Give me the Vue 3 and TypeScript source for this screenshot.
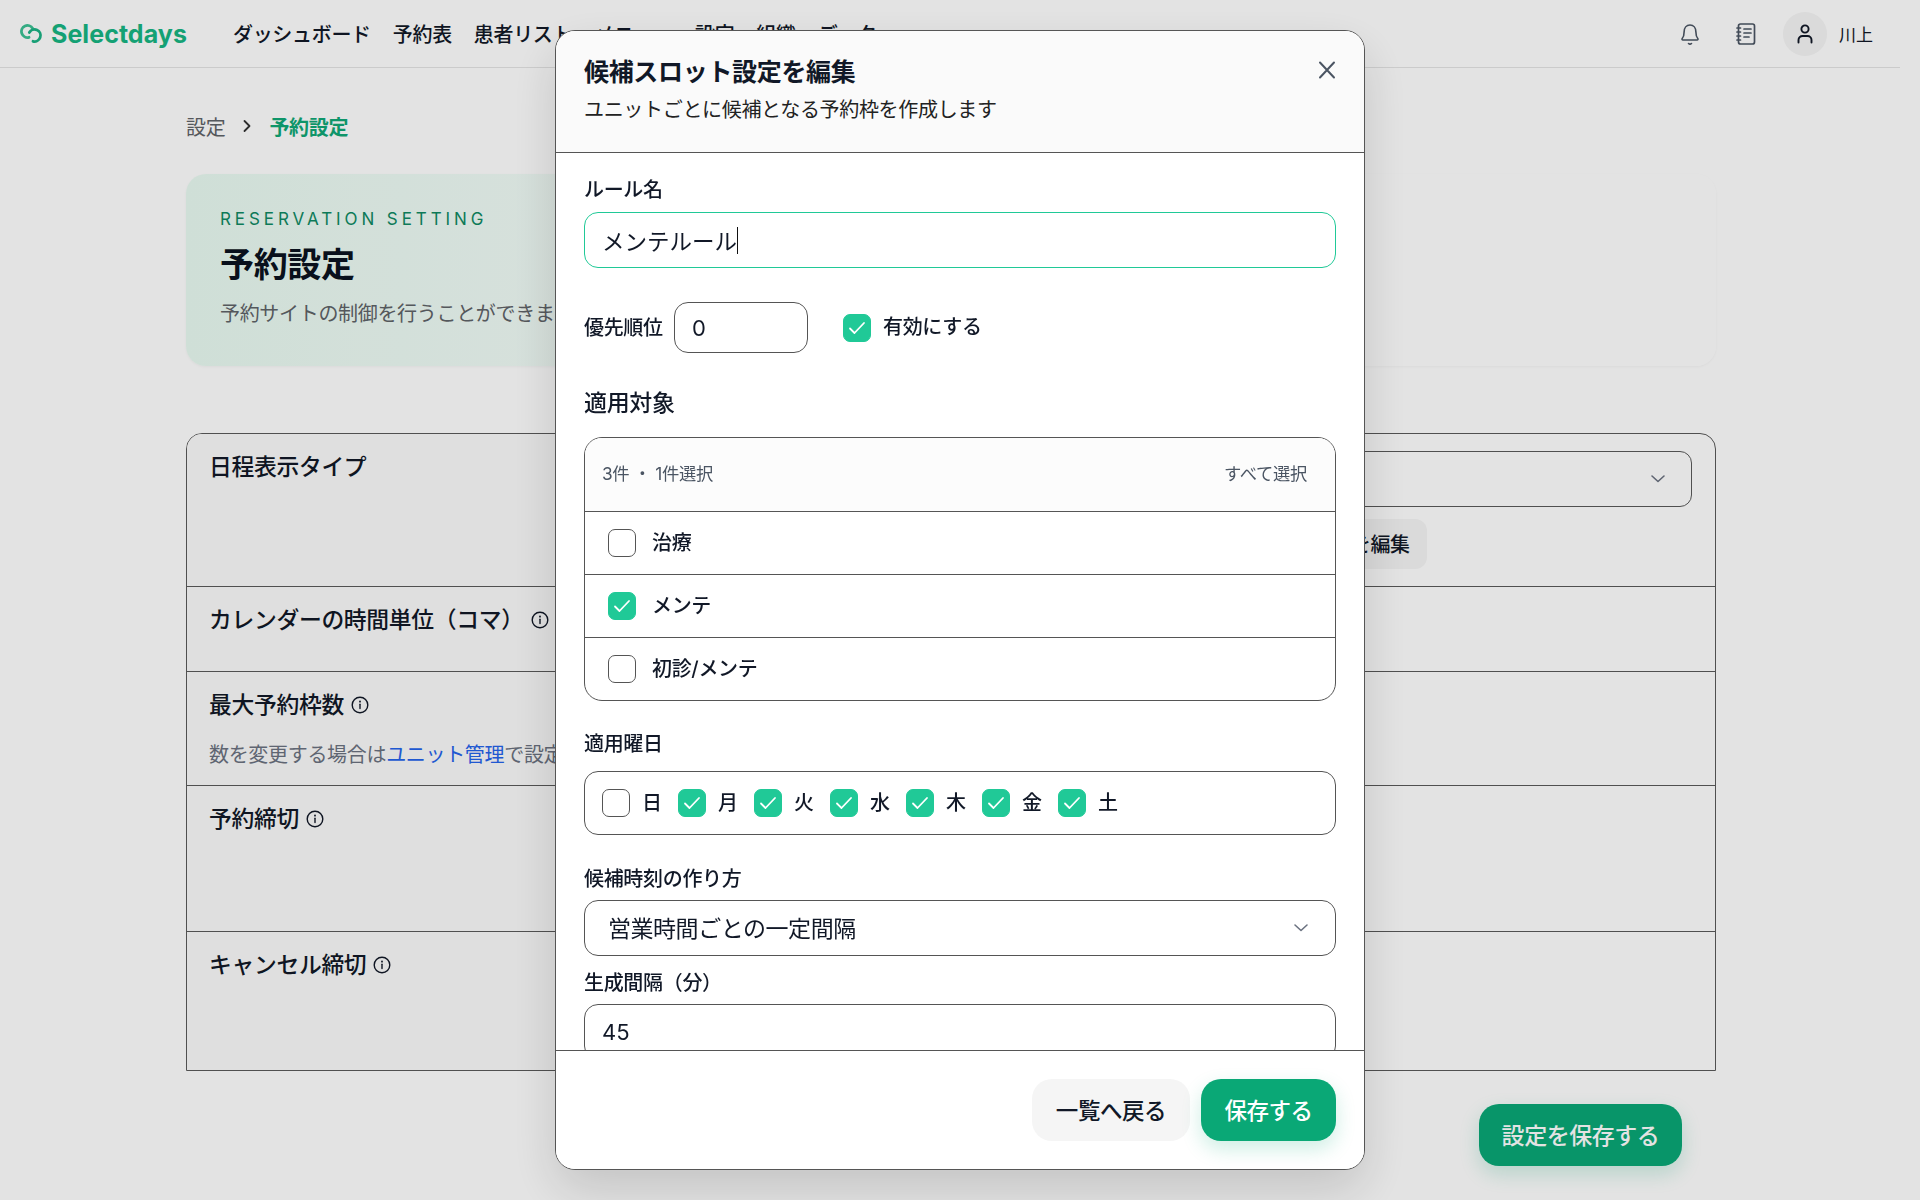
<script setup lang="ts">
const navItems: string[] = ['ダッシュボード', '予約表', '患者リスト', 'メニュー', '設定', '組織', 'データ']
const rows: { label: string; note?: boolean; info: boolean }[] = [
  { label: '日程表示タイプ', info: false },
  { label: 'カレンダーの時間単位（コマ）', info: true },
  { label: '最大予約枠数', note: true, info: true },
  { label: '予約締切', info: true },
  { label: 'キャンセル締切', info: true }
]
const targets = [
  { name: '治療', on: false },
  { name: 'メンテ', on: true },
  { name: '初診/メンテ', on: false }
]
const days = [
  { name: '日', on: false },
  { name: '月', on: true },
  { name: '火', on: true },
  { name: '水', on: true },
  { name: '木', on: true },
  { name: '金', on: true },
  { name: '土', on: true }
]
</script>

<template>
  <div class="page">
    <header class="topbar">
      <div class="logo">
        <svg width="24" height="20" viewBox="0 0 24 20" fill="none">
          <path d="M12.700 4.500A6 6 0 1 0 9 13.300" stroke="#3cc194" stroke-width="2.800" stroke-linecap="round" />
          <path d="M9.300 8.500A6 6 0 1 1 13 17.300" stroke="#1cb385" stroke-width="2.800" stroke-linecap="round" />
        </svg>
        <span>Selectdays</span>
      </div>
      <nav class="nav">
        <a v-for="n in navItems" :key="n">{{ n }}</a>
      </nav>
      <div class="top-right">
        <svg width="24" height="26" viewBox="0 0 24 26" fill="none" stroke="#4b5563" stroke-width="1.600" stroke-linecap="round" stroke-linejoin="round">
          <path d="M4.200 17.500c1.500-1.600 1.900-3 1.900-6.500 0-4 2.300-7 5.900-7s5.900 3 5.900 7c0 3.500.4 4.900 1.900 6.500.5.600.1 1.500-.7 1.500H4.900c-.8 0-1.200-.9-.7-1.500Z" />
          <path d="M10.500 22.500c.8.700 2.200.700 3 0" />
        </svg>
        <svg class="book" width="24" height="26" viewBox="0 0 24 26" fill="none" stroke="#4b5563" stroke-width="1.700" stroke-linecap="round" stroke-linejoin="round">
          <rect x="4.500" y="3" width="16" height="20" rx="2" />
          <path d="M3 7h3.500M3 11h3.500M3 15h3.500M3 19h3.500M10 8h7M10 12h7M10 16h5" />
        </svg>
        <div class="avatar">
          <svg width="24" height="26" viewBox="0 0 24 26" fill="none" stroke="#111827" stroke-width="1.900" stroke-linecap="round">
            <circle cx="12" cy="8" r="3.600" />
            <path d="M5.500 21.500V19a4 4 0 0 1 4-4h5a4 4 0 0 1 4 4v2.500" />
          </svg>
        </div>
        <span class="user">川上</span>
      </div>
    </header>

    <main class="content">
      <div class="crumbs">
        <span class="crumb">設定</span>
        <svg width="10" height="14" viewBox="0 0 10 14" fill="none" stroke="#333" stroke-width="1.800" stroke-linecap="round" stroke-linejoin="round"><path d="M2.500 2l5 5-5 5" /></svg>
        <span class="crumb-on">予約設定</span>
      </div>

      <section class="hero">
        <div class="eyebrow">RESERVATION SETTING</div>
        <h1>予約設定</h1>
        <p>予約サイトの制御を行うことができます</p>
      </section>

      <section class="table">
        <div v-for="(r, i) in rows" :key="r.label" class="row">
          <div class="cell-left">
            <div class="row-label">
              <span>{{ r.label }}</span>
              <svg v-if="r.info" width="18" height="18" viewBox="0 0 18 18" fill="none" stroke="#111827" stroke-width="1.400" stroke-linecap="round">
                <circle cx="9" cy="9" r="7.800" />
                <path d="M9 8.200v4.300" />
                <path d="M9 5.400v.3" stroke-width="1.800" />
              </svg>
            </div>
            <p v-if="r.note" class="row-note">数を変更する場合は<a>ユニット管理</a>で設定してください</p>
          </div>
          <div class="cell-right">
            <template v-if="i === 0">
              <div class="bg-select">
                <svg width="16" height="10" viewBox="0 0 16 10" fill="none" stroke="#6b7280" stroke-width="1.600" stroke-linecap="round" stroke-linejoin="round"><path d="M2 2l6 5.500L14 2" /></svg>
              </div>
              <button class="bg-edit">候補スロット設定を編集</button>
            </template>
          </div>
        </div>
      </section>

      <div class="page-actions">
        <button class="save-page">設定を保存する</button>
      </div>
    </main>
  </div>

  <div class="overlay">
    <div class="modal">
      <div class="m-head">
        <div>
          <h2>候補スロット設定を編集</h2>
          <p>ユニットごとに候補となる予約枠を作成します</p>
        </div>
        <svg class="close" width="24" height="24" viewBox="0 0 24 24" fill="none" stroke="#4b5563" stroke-width="2" stroke-linecap="round"><path d="M5 4.500l14 15M19 4.500l-14 15" /></svg>
      </div>

      <div class="m-body">
        <label class="f-label first">ルール名</label>
        <div class="input focus">メンテルール<i class="caret"></i></div>

        <div class="prio">
          <label class="prio-label">優先順位</label>
          <div class="input small">0</div>
          <span class="cb on"><svg width="22" height="22" viewBox="0 0 22 22" fill="none" stroke="#fff" stroke-width="1.800" stroke-linecap="round" stroke-linejoin="round"><path d="M4 11.500l4.500 4.500L18 6" /></svg></span>
          <span class="prio-on">有効にする</span>
        </div>

        <h3>適用対象</h3>
        <div class="list">
          <div class="list-head">
            <span>3件 ・ 1件選択</span>
            <span>すべて選択</span>
          </div>
          <div v-for="t in targets" :key="t.name" class="list-row">
            <span class="cb" :class="{ on: t.on }"><svg v-if="t.on" width="22" height="22" viewBox="0 0 22 22" fill="none" stroke="#fff" stroke-width="1.800" stroke-linecap="round" stroke-linejoin="round"><path d="M4 11.500l4.500 4.500L18 6" /></svg></span>
            <span class="up">{{ t.name }}</span>
          </div>
        </div>

        <label class="f-label days-label tight">適用曜日</label>
        <div class="days">
          <div v-for="d in days" :key="d.name" class="day">
            <span class="cb" :class="{ on: d.on }"><svg v-if="d.on" width="22" height="22" viewBox="0 0 22 22" fill="none" stroke="#fff" stroke-width="1.800" stroke-linecap="round" stroke-linejoin="round"><path d="M4 11.500l4.500 4.500L18 6" /></svg></span>
            <span class="up">{{ d.name }}</span>
          </div>
        </div>

        <label class="f-label days-label">候補時刻の作り方</label>
        <div class="input select">
          <span class="up">営業時間ごとの一定間隔</span>
          <svg width="16" height="10" viewBox="0 0 16 10" fill="none" stroke="#6b7280" stroke-width="1.600" stroke-linecap="round" stroke-linejoin="round"><path d="M2 2l6 5.500L14 2" /></svg>
        </div>
        <label class="f-label gap-label">生成間隔（分）</label>
        <div class="input number">45</div>
      </div>

      <div class="m-foot">
        <button class="back">一覧へ戻る</button>
        <button class="save">保存する</button>
      </div>
    </div>
  </div>
</template>

<style>
html, body { margin: 0; background: #fff; }
</style>

<style scoped>
* { box-sizing: border-box; }
.page, .overlay {
  font-family: Inter, "Noto Sans CJK JP", sans-serif;
  color: #111827;
  letter-spacing: -0.02em;
}
.page { width: 1900px; height: 1200px; background: #fff; overflow: hidden; }
.up { padding-bottom: 3px; }

.topbar {
  display: flex; align-items: center;
  height: 68px; padding: 0 27px 0 20px;
  border-bottom: 1px solid #e5e5e5;
}
.logo {
  display: flex; align-items: center; gap: 7px;
  width: 213px;
  font-size: 25px; font-weight: 700; letter-spacing: 0.002em; color: #17b583;
}
.nav { display: flex; gap: 22px; font-size: 20px; font-weight: 500; }
.top-right { margin-left: auto; display: flex; align-items: center; }
.book { margin-left: 32px; }
.avatar {
  width: 44px; height: 44px; margin-left: 25px; border-radius: 50%;
  background: #f5f5f5; display: flex; align-items: center; justify-content: center;
}
.user { margin-left: 12px; font-size: 17px; font-weight: 400; letter-spacing: 0; }

.content { width: 1530px; margin-left: 186px; }
.crumbs {
  display: flex; align-items: center; gap: 17px;
  height: 26px; margin-top: 45px;
  font-size: 20px;
}
.crumb { color: #5f6368; }
.crumb-on { color: #10a877; font-weight: 700; }

.hero {
  height: 192px; margin-top: 35px; padding: 32px 34px;
  border-radius: 20px;
  background: linear-gradient(90deg, #e9fbf2 0%, #fff 62%);
  box-shadow: 0 1px 3px rgba(0,0,0,.04);
}
.eyebrow { font-size: 17px; line-height: 26px; letter-spacing: 0.23em; color: #0f8a63; }
h1 { margin: 10px 0 0; font-size: 34px; line-height: 46px; font-weight: 700; color: #0b1220; }
.hero p { margin: 13px 0 0; font-size: 20px; line-height: 26px; color: #5f6368; }

.table {
  margin-top: 67px; height: 638px;
  display: grid; grid-template-rows: 153px 85px 114px 146px 1fr;
  border: 1px solid #5a5a5a; border-radius: 16px 16px 0 0; overflow: hidden;
}
.row { display: grid; grid-template-columns: 969px 1fr; border-bottom: 1px solid #5a5a5a; }
.row:last-child { border-bottom: 0; }
.cell-left { background: #fbfbfb; padding: 18px 22px 0; }
.row-label { display: flex; align-items: center; gap: 7px; font-size: 22.800px; line-height: 30px; font-weight: 500; }
.row-note { margin: 22px 0 0; font-size: 20px; line-height: 26px; color: #6b7280; white-space: nowrap; }
.row-note a { color: #2563eb; }
.cell-right { padding: 17px 23px 0 21px; }
.bg-select {
  display: flex; align-items: center; justify-content: flex-end;
  height: 56px; padding-right: 25px;
  border: 1px solid #5a5a5a; border-radius: 12px; background: #fff;
}
.bg-edit {
  display: block; height: 50px; margin-top: 12px; padding: 0 17px 2px;
  border: 0; border-radius: 12px; background: #f5f5f5;
  font: inherit; font-size: 20px; font-weight: 500; letter-spacing: -0.02em; color: #111827;
}
.page-actions { display: flex; justify-content: flex-end; padding: 33px 34px 0 0; }
.save-page {
  width: 203px; height: 62px; padding: 0 0 3px;
  border: 0; border-radius: 20px; background: #0aa876;
  box-shadow: 0 8px 20px rgba(10,168,118,.2);
  font: inherit; font-size: 23px; font-weight: 500; letter-spacing: -0.02em; color: #fff;
}

.overlay {
  position: fixed; inset: 0;
  display: flex; align-items: center; justify-content: center;
  background: rgba(0,0,0,.11);
}
.modal {
  display: flex; flex-direction: column;
  width: 810px; height: 1140px;
  border: 1px solid #555; border-radius: 20px; background: #fff; overflow: hidden;
  box-shadow: 0 20px 50px rgba(0,0,0,.14);
}
.m-head {
  flex: none; display: flex; justify-content: space-between; align-items: flex-start;
  height: 122px; padding: 24px 25px 0 28px;
  border-bottom: 1px solid #555; background: #fafafa;
}
h2 { margin: 0; font-size: 25px; line-height: 34px; font-weight: 700; }
.m-head p { margin: 8px 0 0; font-size: 20px; line-height: 26px; color: #222; }
.close { margin-top: 3px; }

.m-body { flex: 1; min-height: 0; overflow: hidden; padding: 24px 28px 0 28px; }
.f-label { display: block; font-size: 20px; line-height: 26px; font-weight: 500; }
.days-label { margin-top: 31px; }
.days-label.tight { margin-top: 30px; }
.gap-label { margin-top: 14px; }
.input {
  display: flex; align-items: center;
  height: 56px; margin-top: 9px; padding: 0 17px;
  border: 1px solid #555; border-radius: 14px;
  font-size: 22px; letter-spacing: 0; background: #fff;
}
.focus { border-color: #20c997; font-size: 22.500px; }
.caret { display: block; width: 1px; height: 27px; background: #111; }
.prio { display: flex; align-items: center; margin-top: 34px; }
.prio-label { font-size: 20px; font-weight: 500; width: 90px; padding-bottom: 3px; }
.small { width: 134px; height: 51px; margin: 0; }
.prio .cb { margin-left: 35px; }
.prio-on { margin-left: 12px; font-size: 20px; font-weight: 500; padding-bottom: 5px; }

.cb {
  flex: none; display: inline-flex; align-items: center; justify-content: center;
  width: 28px; height: 28px;
  border: 1px solid #555; border-radius: 7px; background: #fff;
}
.cb.on { border-color: #20c997; background: #20c997; }

h3 { margin: 35px 0 0; font-size: 23px; line-height: 30px; font-weight: 500; }
.list { margin-top: 19px; border: 1px solid #555; border-radius: 18px; overflow: hidden; }
.list-head {
  display: flex; justify-content: space-between; align-items: center;
  height: 73px; padding: 0 28px 4px 17px;
  background: #fcfcfc; font-size: 17.300px; color: #4b5563;
}
.list-row {
  display: flex; align-items: center; gap: 16px;
  height: 63px; padding-left: 23px;
  border-top: 1px solid #555;
  font-size: 20px; font-weight: 500;
}
.days {
  display: flex; gap: 17px; align-items: center;
  height: 64px; margin-top: 14px; padding-left: 17px;
  border: 1px solid #555; border-radius: 14px;
}
.day { display: flex; align-items: center; gap: 12px; width: 59px; font-size: 20px; font-weight: 500; }
.select { justify-content: space-between; margin-top: 8px; padding: 0 26px 0 23px; font-size: 23px; letter-spacing: -0.02em; }
.number { margin-top: 8px; }

.m-foot {
  flex: none; display: flex; justify-content: flex-end; gap: 11px;
  height: 119px; padding: 28px 28px 0 0;
  border-top: 1px solid #555; background: #fff;
}
.back, .save {
  height: 62px; border: 0; border-radius: 20px; padding: 0 0 3px;
  font: inherit; font-size: 22.500px; font-weight: 500; letter-spacing: -0.02em;
}
.back { width: 158px; background: #f5f5f5; color: #111827; }
.save { width: 135px; background: #0aa876; color: #fff; box-shadow: 0 8px 20px rgba(10,168,118,.2); }
</style>
